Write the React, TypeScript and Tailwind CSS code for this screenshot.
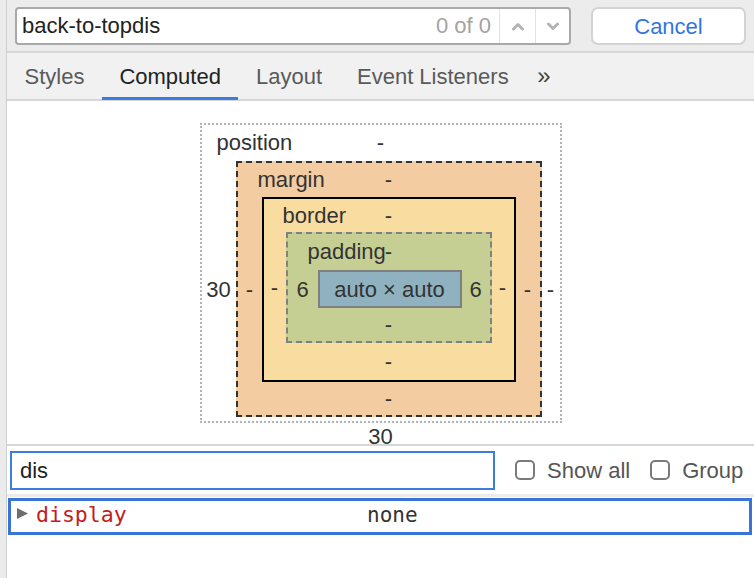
import React from 'react';

// одна "рамка" box model: подпись сверху, значения по бокам и снизу
function BoxRow({ label, value, h, pl }: { label?: string; value: string; h: number; pl?: number }) {
  return (
    <div
      className="grid grid-cols-[minmax(0,1fr)_auto_minmax(0,1fr)] whitespace-nowrap"
      style={{ height: h, lineHeight: `${h}px` }}
    >
      <span style={{ paddingLeft: pl }}>{label}</span>
      <span>{value}</span>
      <span />
    </div>
  );
}

function Side({ w, value }: { w: number; value: string }) {
  return (
    <div className="flex items-center justify-center shrink-0" style={{ width: w }}>
      {value}
    </div>
  );
}

function Chevron({ down }: { down?: boolean }) {
  return (
    <svg width="12" height="9" viewBox="0 0 12 9" className="text-[#b4b4b4]">
      <polyline
        points={down ? '1.5,2 6,6.5 10.5,2' : '1.5,7 6,2.5 10.5,7'}
        fill="none"
        stroke="currentColor"
        strokeWidth="3"
        strokeLinecap="round"
        strokeLinejoin="round"
      />
    </svg>
  );
}

function Checkbox({ label }: { label: string }) {
  return (
    <label className="flex items-center gap-[12px] text-[22px] text-[#555]">
      <span className="w-[20px] h-[20px] rounded-[5px] border-2 border-[#7a7a7a] bg-white" />
      {label}
    </label>
  );
}

export default function App() {
  const tabs = ['Styles', 'Computed', 'Layout', 'Event Listeners'];

  return (
    <div className="w-[754px] h-[578px] flex overflow-hidden bg-white font-['Liberation_Sans',Arial,sans-serif]">
      <div className="w-[7px] shrink-0 bg-[#ebebeb] border-r border-[#cfcfcf]" />

      <div className="flex-1 flex flex-col min-w-0">
        {/* поиск */}
        <div className="h-[53px] shrink-0 bg-[#ececec] border-b-2 border-[#d6d6d6] flex items-start pt-[7px] pl-[8px] pr-[8px] gap-[20px]">
          <div className="w-[556px] h-[38px] flex items-stretch bg-white border-2 border-[#a9a9a9] rounded-[4px]">
            <span className="flex-1 pl-[5px] text-[22px] leading-[34px] text-[#222]">back-to-topdis</span>
            <span className="pr-[8px] text-[22px] leading-[34px] text-[#a3a3a3]">0 of 0</span>
            <div className="w-[36px] border-l border-[#e2e2e2] flex items-center justify-center">
              <Chevron />
            </div>
            <div className="w-[34px] border-l border-[#e2e2e2] flex items-center justify-center">
              <Chevron down />
            </div>
          </div>
          <button className="w-[155px] h-[38px] bg-white border-2 border-[#d3d3d3] rounded-[7px] text-[22px] text-[#3176e0]">
            Cancel
          </button>
        </div>

        {/* вкладки */}
        <div className="h-[48px] shrink-0 bg-[#f1f1f1] border-b-2 border-[#d6d6d6] flex items-stretch">
          {tabs.map((t) => (
            <div
              key={t}
              className={`relative flex items-center px-[17.5px] text-[22px] ${
                t === 'Computed' ? 'text-[#222]' : 'text-[#5a5a5a]'
              }`}
            >
              {t}
              {t === 'Computed' && (
                <span className="absolute left-0 right-0 bottom-[-1px] h-[3px] bg-[#3b7be2]" />
              )}
            </div>
          ))}
          <div className="flex items-center pl-[11px] text-[24px] text-[#444]">»</div>
        </div>

        {/* box model */}
        <div className="h-[343px] shrink-0 overflow-hidden flex justify-center pt-[22px] text-[22px] text-[#333]">
          <div className="w-[362px] h-[300px] border-2 border-dotted border-[#b3b3b3] flex flex-col">
            <BoxRow label="position" value="-" h={36} pl={15} />
            <div className="flex">
              <Side w={34} value="30" />
              <div className="w-[306px] h-[256px] bg-[#f3cca2] border-2 border-dashed border-[#333] flex flex-col">
                <BoxRow label="margin" value="-" h={34} pl={20} />
                <div className="flex">
                  <Side w={24} value="-" />
                  <div className="w-[254px] h-[185px] bg-[#f8dca0] border-2 border-black flex flex-col">
                    <BoxRow label="border" value="-" h={33} pl={19} />
                    <div className="flex">
                      <Side w={22} value="-" />
                      <div className="w-[206px] h-[111px] bg-[#c5cf93] border-2 border-dashed border-[#818181] flex flex-col">
                        <BoxRow label="padding" value="-" h={36} pl={20} />
                        <div className="flex">
                          <Side w={30} value="6" />
                          <div className="w-[144px] h-[38px] bg-[#90b2c0] border-2 border-[#7f7f7f] flex items-center justify-center whitespace-nowrap">
                            auto × auto
                          </div>
                          <Side w={28} value="6" />
                        </div>
                        <BoxRow value="-" h={33} />
                      </div>
                      <Side w={22} value="-" />
                    </div>
                    <BoxRow value="-" h={37} />
                  </div>
                  <Side w={24} value="-" />
                </div>
                <BoxRow value="-" h={33} />
              </div>
              <Side w={18} value="-" />
            </div>
            <div className="h-[4px] overflow-visible">
              <div className="mt-[7px] leading-[26px] text-center">30</div>
            </div>
          </div>
        </div>

        {/* фильтр */}
        <div className="h-[53px] shrink-0 border-t-2 border-b-[3px] border-t-[#d6d6d6] border-b-[#ececec] flex items-center pl-[3px] gap-[20px]">
          <div className="w-[485px] h-[39px] border-2 border-[#3d7ce0] pl-[8px] text-[22px] leading-[35px] text-[#222]">
            dis
          </div>
          <Checkbox label="Show all" />
          <Checkbox label="Group" />
        </div>

        <div className="mt-[1px] ml-[1px] mr-[2px] h-[37px] border-[3px] border-[#3874d8] flex items-center pl-[6px]">
          <svg width="11" height="11" viewBox="0 0 11 11" className="shrink-0 -mt-[6px]">
            <polygon points="0,0 11,5.5 0,11" fill="#6d6d6d" />
          </svg>
          <span className="w-[331px] ml-[8px] font-['DejaVu_Sans_Mono',monospace] text-[21.5px] text-[#c4201b] -mt-[2px]">
            display
          </span>
          <span className="font-['DejaVu_Sans_Mono',monospace] text-[21px] text-[#333] -mt-[2px]">none</span>
        </div>
      </div>
    </div>
  );
}
